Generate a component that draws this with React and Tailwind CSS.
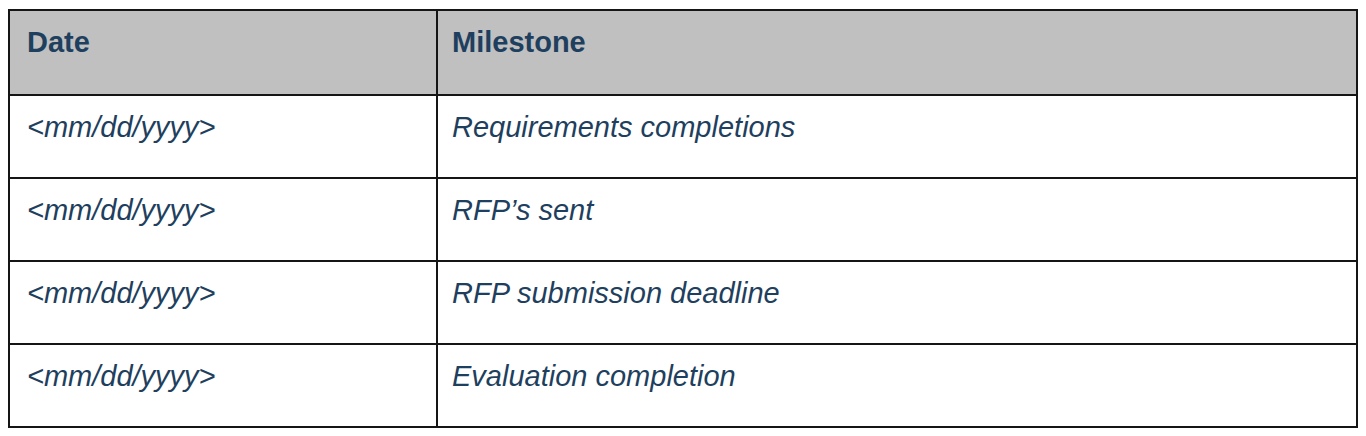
const ROWS = [
  { date: "<mm/dd/yyyy>", milestone: "Requirements completions" },
  { date: "<mm/dd/yyyy>", milestone: "RFP’s sent" },
  { date: "<mm/dd/yyyy>", milestone: "RFP submission deadline" },
  { date: "<mm/dd/yyyy>", milestone: "Evaluation completion" },
];

export default function App() {
  return (
    <div className="w-[1366px] h-[436px] bg-white pt-[9px] pl-2 font-['Liberation_Sans',Arial,sans-serif] text-[29px] leading-[32px] text-[#1f3f5e]">
      <div className="w-[1350px] border-2 border-[#151515]">
        <div className="grid grid-cols-[428px_1fr] h-[83px] bg-[#c0c0c0] font-bold">
          <div className="border-r-2 border-[#151515] pl-[17px] pt-[15px]">Date</div>
          <div className="pl-[14px] pt-[15px]">Milestone</div>
        </div>
        {ROWS.map((row, i) => (
          <div key={i} className="grid grid-cols-[428px_1fr] h-[83px] border-t-2 border-[#151515] italic">
            <div className="border-r-2 border-[#151515] pl-[17px] pt-[15px]">{row.date}</div>
            <div className="pl-[14px] pt-[15px]">{row.milestone}</div>
          </div>
        ))}
      </div>
    </div>
  );
}
